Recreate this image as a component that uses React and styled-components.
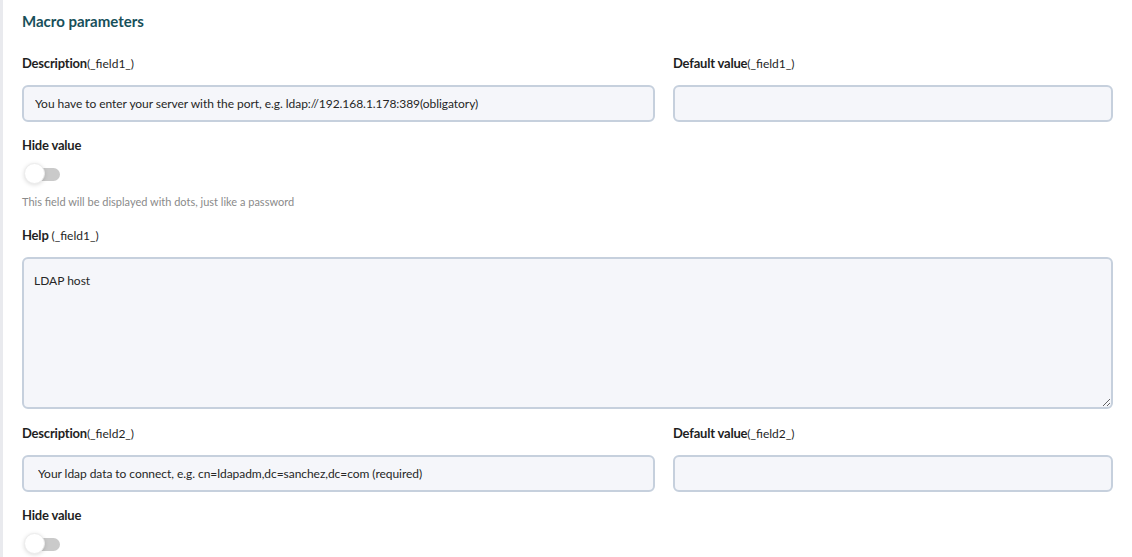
import React from "react";
import styled, { createGlobalStyle } from "styled-components";

const Global = createGlobalStyle`
  html, body { margin: 0; padding: 0; background: #fff; }
  body { font-family: Lato, "Open Sans", Arial, sans-serif; color: #222; }
  * { box-sizing: border-box; }
`;

const Panel = styled.div`
  border-left: 3px solid #e9eaee;
  padding: 11px 19px 0 19px;
  width: 1132px;
  height: 557px;
  overflow: hidden;
`;

const Title = styled.h3`
  margin: 0 0 23px;
  font-size: 15px;
  line-height: 20px;
  font-weight: 700;
  color: #18505a;
`;

const Row = styled.div`
  display: grid;
  grid-template-columns: 633fr 440fr;
  column-gap: 18px;
`;

const Field = styled.div`
  display: flex;
  flex-direction: column;
`;

const Label = styled.label`
  display: block;
  font-size: 13px;
  line-height: 18px;
  font-weight: 700;
  color: #1f1f1f;
  margin-top: ${(p) => p.$top || 0}px;
  margin-bottom: ${(p) => p.$bottom ?? 12}px;
  letter-spacing: -0.2px;
`;

const Hint = styled.span`
  font-weight: 400;
  font-size: 12px;
  letter-spacing: 0;
`;

const inputBase = `
  width: 100%;
  border: 2px solid #c6d0dd;
  border-radius: 6px;
  background: #f5f6fa;
  font-family: Lato, "Open Sans", Arial, sans-serif;
  font-size: 12px;
  color: #262626;
  outline: none;
`;

const Input = styled.input`
  ${inputBase}
  display: block;
  height: 37px;
  padding: 0 ${(p) => p.$pad || 11}px;
  letter-spacing: -0.05px;
`;

const TextArea = styled.textarea`
  ${inputBase}
  display: block;
  height: 152px;
  padding: 14px 10px;
  line-height: 16px;
  resize: vertical;
`;

const SwitchTrack = styled.span`
  position: relative;
  display: block;
  width: 38px;
  height: 22px;
  margin: ${(p) => p.$margin};
`;

const Track = styled.span`
  position: absolute;
  left: 6px;
  top: 5px;
  width: 32px;
  height: 13px;
  border-radius: 7px;
  background: #cacaca;
`;

const Knob = styled.span`
  position: absolute;
  left: 2px;
  top: 0;
  width: 21px;
  height: 21px;
  border-radius: 50%;
  background: #fff;
  border: 1px solid #ececec;
  box-shadow: 0 1px 4px rgba(0, 0, 0, 0.14);
`;

const Helper = styled.p`
  margin: 0;
  font-size: 11px;
  line-height: 14px;
  color: #8a8a8a;
`;

const Switch = ({ margin }) => (
  <SwitchTrack $margin={margin}>
    <Track />
    <Knob />
  </SwitchTrack>
);

export default function App() {
  return (
    <>
      <Global />
      <Panel>
        <Title>Macro parameters</Title>

        <Row>
          <Field>
            <Label>
              Description<Hint>(_field1_)</Hint>
            </Label>
            <Input
              readOnly
              value="You have to enter your server with the port, e.g. ldap://192.168.1.178:389(obligatory)"
            />
          </Field>
          <Field>
            <Label>
              Default value<Hint>(_field1_)</Hint>
            </Label>
            <Input readOnly value="" />
          </Field>
        </Row>

        <Label $top={14} $bottom={9}>Hide value</Label>
        <Switch margin="0 0 10px 0" />
        <Helper>This field will be displayed with dots, just like a password</Helper>

        <Label $top={17} $bottom={12}>
          Help <Hint>(_field1_)</Hint>
        </Label>
        <TextArea readOnly value="LDAP host" />

        <Row>
          <Field>
            <Label $top={15}>
              Description<Hint>(_field2_)</Hint>
            </Label>
            <Input
              readOnly
              $pad={14}
              value="Your ldap data to connect, e.g. cn=ldapadm,dc=sanchez,dc=com (required)"
            />
          </Field>
          <Field>
            <Label $top={15}>
              Default value<Hint>(_field2_)</Hint>
            </Label>
            <Input readOnly value="" />
          </Field>
        </Row>

        <Label $top={14} $bottom={9}>Hide value</Label>
        <Switch margin="0" />
      </Panel>
    </>
  );
}
